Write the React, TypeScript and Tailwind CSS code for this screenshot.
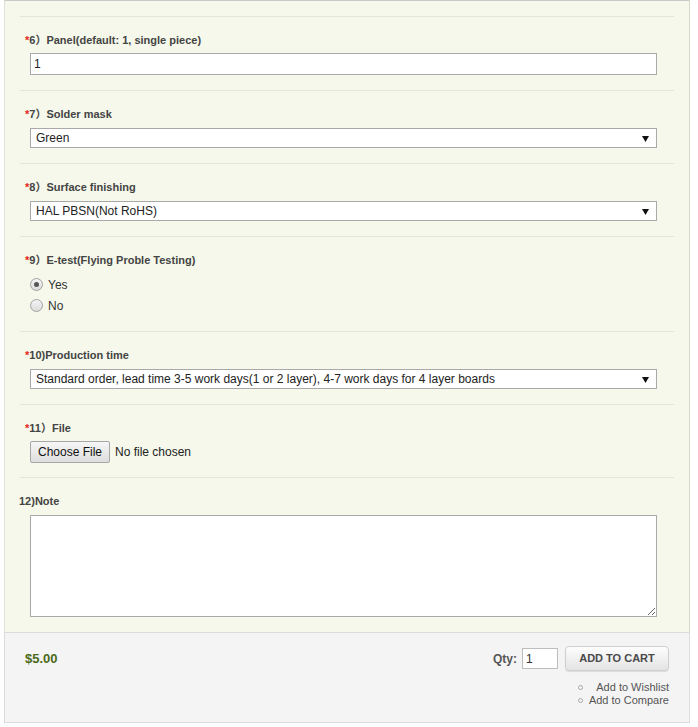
import React from "react";

const Star = () => <span className="text-[#e4251b]">*</span>;

function Label({ children, star = true, note = false }: { children: React.ReactNode; star?: boolean; note?: boolean }) {
  return (
    <div className={`h-[16px] leading-[16px] text-[11px] font-bold text-[#444] ${note ? "-ml-px" : "pl-[5px]"}`}>
      {star && <Star />}
      {children}
    </div>
  );
}

function Section({ children }: { children: React.ReactNode }) {
  return <div className="border-t border-[#e2e6d5] pt-[15px] pb-[15px]">{children}</div>;
}

function Select({ value }: { value: string }) {
  return (
    <div className="mt-[6px] ml-[10px] w-[627px] h-[20px] bg-white border border-[#a9a9a9] flex items-center justify-between pl-[5px] pr-[7px]">
      <span className="text-[12px] text-[#222] leading-none">{value}</span>
      <svg width="7" height="6" viewBox="0 0 7 6" className="mt-px">
        <polygon points="0,0 7,0 3.5,6" fill="#111" />
      </svg>
    </div>
  );
}

function Radio({ checked, label }: { checked?: boolean; label: string }) {
  return (
    <div className="h-[21px] flex items-center pl-[10px]">
      <span className="w-[13px] h-[13px] rounded-full border border-[#a3a3a3] bg-gradient-to-b from-[#f4f4f4] to-[#dcdcdc] flex items-center justify-center">
        {checked && <span className="w-[5px] h-[5px] rounded-full bg-[#555]" />}
      </span>
      <span className="ml-[5px] text-[12px] text-[#333]">{label}</span>
    </div>
  );
}

export default function App() {
  return (
    <div className="w-[698px] h-[727px] bg-white font-['Liberation_Sans','Noto_Sans_CJK_SC',Arial,sans-serif]">
      <div className="ml-[4px] w-[686px] border-l border-r border-t border-l-[#dfe2d5] border-r-[#d6d9cc] border-t-[#c9c9c9] bg-[#f5f8ea] px-[15px] pt-[15px]">
        <Section>
          <Label>6）Panel(default: 1, single piece)</Label>
          <div className="mt-[5px] ml-[10px] w-[627px] h-[22px] bg-white border border-[#a9a9a9] flex items-center pl-[3px]">
            <span className="text-[12px] text-[#222]">1</span>
          </div>
        </Section>
        <Section>
          <Label>7）Solder mask</Label>
          <Select value="Green" />
        </Section>
        <Section>
          <Label>8）Surface finishing</Label>
          <Select value="HAL PBSN(Not RoHS)" />
        </Section>
        <Section>
          <Label>9）E-test(Flying Proble Testing)</Label>
          <div className="mt-[6px]">
            <Radio checked label="Yes" />
            <Radio label="No" />
          </div>
        </Section>
        <Section>
          <Label>10)Production time</Label>
          <Select value="Standard order, lead time 3-5 work days(1 or 2 layer), 4-7 work days for 4 layer boards" />
        </Section>
        <div className="border-t border-[#e2e6d5] pt-[15px] pb-[14px]">
          <Label>11）File</Label>
          <div className="mt-[5px] ml-[10px] flex items-center h-[22px]">
            <div className="w-[80px] h-[22px] border border-[#a6a6a6] rounded-[2px] bg-gradient-to-b from-[#f6f6f6] to-[#dedede] flex items-center justify-center text-[12px] text-[#111]">
              Choose File
            </div>
            <span className="ml-[5px] text-[12px] text-[#222]">No file chosen</span>
          </div>
        </div>
        <Section>
          <Label star={false} note>12)Note</Label>
          <textarea className="block mt-[6px] ml-[10px] w-[627px] h-[102px] bg-white border border-[#a9a9a9] outline-none" />
        </Section>
      </div>
      <div className="ml-[4px] w-[686px] h-[91px] border border-[#dcdcdc] bg-[#f4f4f4] pl-[20px] pr-[20px] pt-[13px] flex justify-between">
        <div className="h-[25px] flex items-center">
          <span className="text-[13px] font-bold text-[#4b6a18]">$5.00</span>
        </div>
        <div className="flex flex-col items-end">
          <div className="flex items-center h-[25px]">
            <span className="text-[12px] font-bold text-[#555]">Qty:</span>
            <div className="ml-[5px] w-[36px] h-[21px] bg-white border border-[#bdbdbd] flex items-center pl-[3px] text-[12px] text-[#333]">1</div>
            <div className="ml-[7px] w-[104px] h-[25px] rounded-[4px] border border-[#cfcfcf] bg-gradient-to-b from-[#fdfdfd] to-[#e4e4e4] shadow-[0_1px_1px_rgba(0,0,0,0.1)] flex items-center justify-center text-[11px] font-bold text-[#4a4a4a]">
              ADD TO CART
            </div>
          </div>
          <div className="mt-[10px] w-[91px] text-[11px] leading-[13px] text-[#555] whitespace-nowrap">
            <div className="flex items-center justify-between">
              <span className="flex-none w-[5px] h-[5px] rounded-full border border-[#aaa]" />
              <span>Add to Wishlist</span>
            </div>
            <div className="flex items-center justify-between">
              <span className="flex-none w-[5px] h-[5px] rounded-full border border-[#aaa]" />
              <span>Add to Compare</span>
            </div>
          </div>
        </div>
      </div>
    </div>
  );
}
